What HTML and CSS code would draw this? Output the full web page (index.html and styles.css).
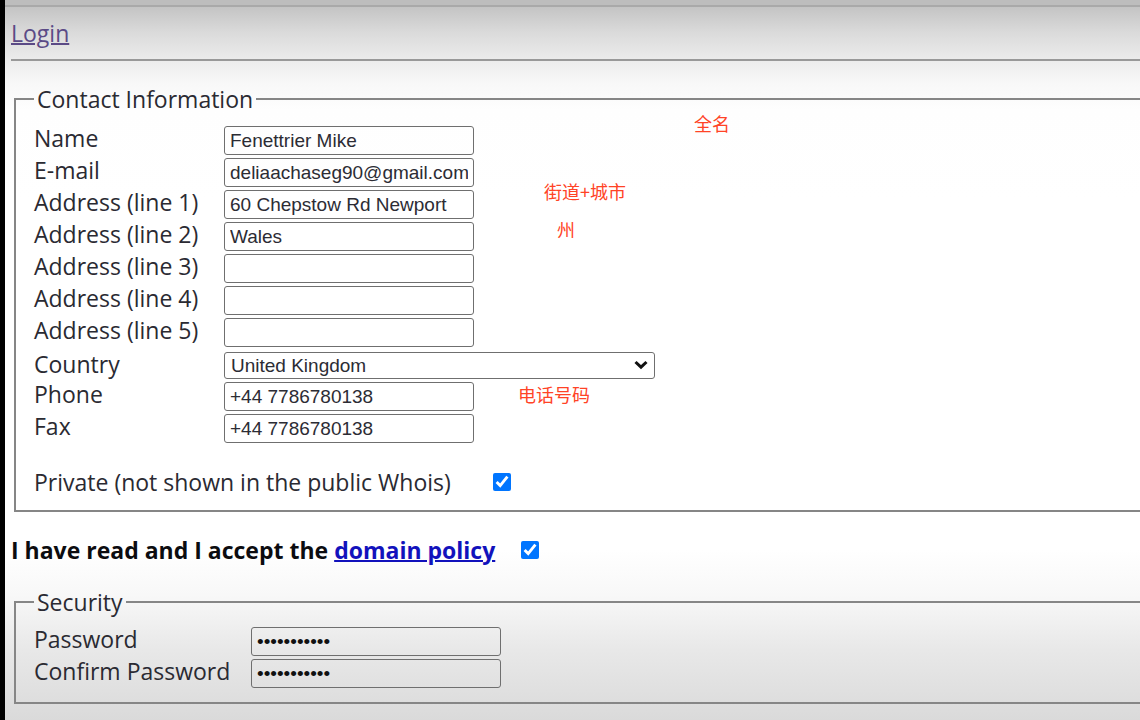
FILE: index.html
```html
<!DOCTYPE html>
<html lang="en">
<head>
<meta charset="utf-8">
<title>Contact Information</title>
<link rel="stylesheet" href="styles.css">
</head>
<body>
<main class="page">
  <nav class="topbar"><a class="login" href="#login">Login</a></nav>
  <form class="form">
    <fieldset class="group">
      <legend class="legend">Contact Information</legend>
      <div class="fields">
        <div class="field"><label class="label" for="name">Name</label><input class="text" id="name" type="text" value="Fenettrier Mike"></div>
        <div class="field"><label class="label" for="email">E-mail</label><input class="text" id="email" type="text" value="deliaachaseg90@gmail.com"></div>
        <div class="field"><label class="label" for="a1">Address (line 1)</label><input class="text" id="a1" type="text" value="60 Chepstow Rd Newport"></div>
        <div class="field"><label class="label" for="a2">Address (line 2)</label><input class="text" id="a2" type="text" value="Wales"></div>
        <div class="field"><label class="label" for="a3">Address (line 3)</label><input class="text" id="a3" type="text"></div>
        <div class="field"><label class="label" for="a4">Address (line 4)</label><input class="text" id="a4" type="text"></div>
        <div class="field"><label class="label" for="a5">Address (line 5)</label><input class="text" id="a5" type="text"></div>
        <div class="field field-select"><label class="label" for="country">Country</label><span class="select-wrap"><select class="select" id="country"><option>United Kingdom</option></select><svg class="chevron" viewBox="0 0 14 10" aria-hidden="true"><path d="M1.5 2 7 7.2 12.500 2"/></svg></span></div>
        <div class="field"><label class="label" for="phone">Phone</label><input class="text" id="phone" type="text" value="+44 7786780138"></div>
        <div class="field"><label class="label" for="fax">Fax</label><input class="text" id="fax" type="text" value="+44 7786780138"></div>
      </div>
      <div class="private"><label for="private">Private (not shown in the public Whois)</label><input class="check" id="private" type="checkbox" checked></div>
      <span class="note note-name" lang="zh">全名</span>
      <span class="note note-street" lang="zh">街道+城市</span>
      <span class="note note-state" lang="zh">州</span>
      <span class="note note-phone" lang="zh">电话号码</span>
    </fieldset>
    <div class="policy"><label for="accept">I have read and I accept the <a class="policy-link" href="#policy">domain policy</a></label><input class="check" id="accept" type="checkbox" checked></div>
    <fieldset class="group security">
      <legend class="legend">Security</legend>
      <div class="fields">
        <div class="field"><label class="label" for="pw">Password</label><input class="text" id="pw" type="password" value="password123"></div>
        <div class="field"><label class="label" for="pw2">Confirm Password</label><input class="text" id="pw2" type="password" value="password123"></div>
      </div>
    </fieldset>
  </form>
</main>
</body>
</html>
```
FILE: styles.css
```css
* { box-sizing: border-box; }

body {
  margin: 0;
  font-family: "Open Sans", "Noto Sans", "Noto Sans CJK SC", sans-serif;
  font-size: 23px;
  line-height: 30px;
  color: #2a2a32;
}

.page {
  min-height: 100vh;
  padding: 5px 0 15px 6px;
  border-left: 5px solid #000;
  background: linear-gradient(#bdbdbd 5px, #a9a9a9 5px, #a9a9a9 7px, #c4c4c4 7px, #dadada 32px, #ececec 60px, #f8f8f8 84px, #fefefe 110px, #fff 200px, #fff calc(100% - 170px), #f8f8f8 calc(100% - 125px), #e8e8e8 calc(100% - 70px), #dadada 100%);
}

.topbar {
  height: 56px;
  padding-top: 13px;
  border-bottom: 2px solid #999;
}

.login { color: #5b4a86; text-decoration-thickness: 2px; }

.group {
  position: relative;
  min-width: 0;
  margin: 23px 0 0 3px;
  padding: 0 0 13px 18px;
  border: 2px solid #868686;
  border-right: 0;
}

.legend { padding: 0 3px; }

.fields {
  display: flex;
  flex-direction: column;
  gap: 3px;
  padding-top: 12px;
}

.field { display: flex; height: 29px; }

.label {
  flex: none;
  width: 190px;
  line-height: 24px;
}

.text, .select {
  border: 1px solid #6f6f6f;
  border-radius: 3px;
  background: transparent;
  color: #2c2c34;
  font-family: "Liberation Sans", Arial, sans-serif;
  font-size: 19px;
}

.text { width: 250px; height: 29px; padding: 0 5px; }

.field-select { padding-top: 2px; }

.select-wrap { position: relative; width: 431px; height: 27px; }

.select {
  display: block;
  appearance: none;
  width: 100%;
  height: 27px;
  padding: 0 6px;
}

.chevron {
  position: absolute;
  top: 8px;
  right: 7px;
  width: 14px;
  height: 10px;
  fill: none;
  stroke: #111;
  stroke-width: 3;
  pointer-events: none;
}

.private {
  display: flex;
  align-items: center;
  gap: 42px;
  margin-top: 24px;
}

.check {
  width: 18px;
  height: 18px;
  margin: 0;
  accent-color: #0075ff;
}

.policy {
  display: flex;
  align-items: center;
  gap: 26px;
  margin-top: 23px;
  font-weight: 700;
  color: #0c0c10;
}

.policy-link { color: #1212bc; text-decoration-thickness: 2px; }

.security { margin-top: 22px; padding-bottom: 14px; }
.security .fields { padding-top: 10px; }
.security .label { width: 217px; }
.security .text { color: #111; }

.note {
  position: absolute;
  color: #ff4326;
  font-family: "Noto Sans CJK SC", sans-serif;
  font-size: 18px;
  line-height: 24px;
}

.note-name { left: 678px; top: -3px; }
.note-street { left: 528px; top: 65px; }
.note-state { left: 541px; top: 103px; }
.note-phone { left: 502px; top: 268px; }
```
